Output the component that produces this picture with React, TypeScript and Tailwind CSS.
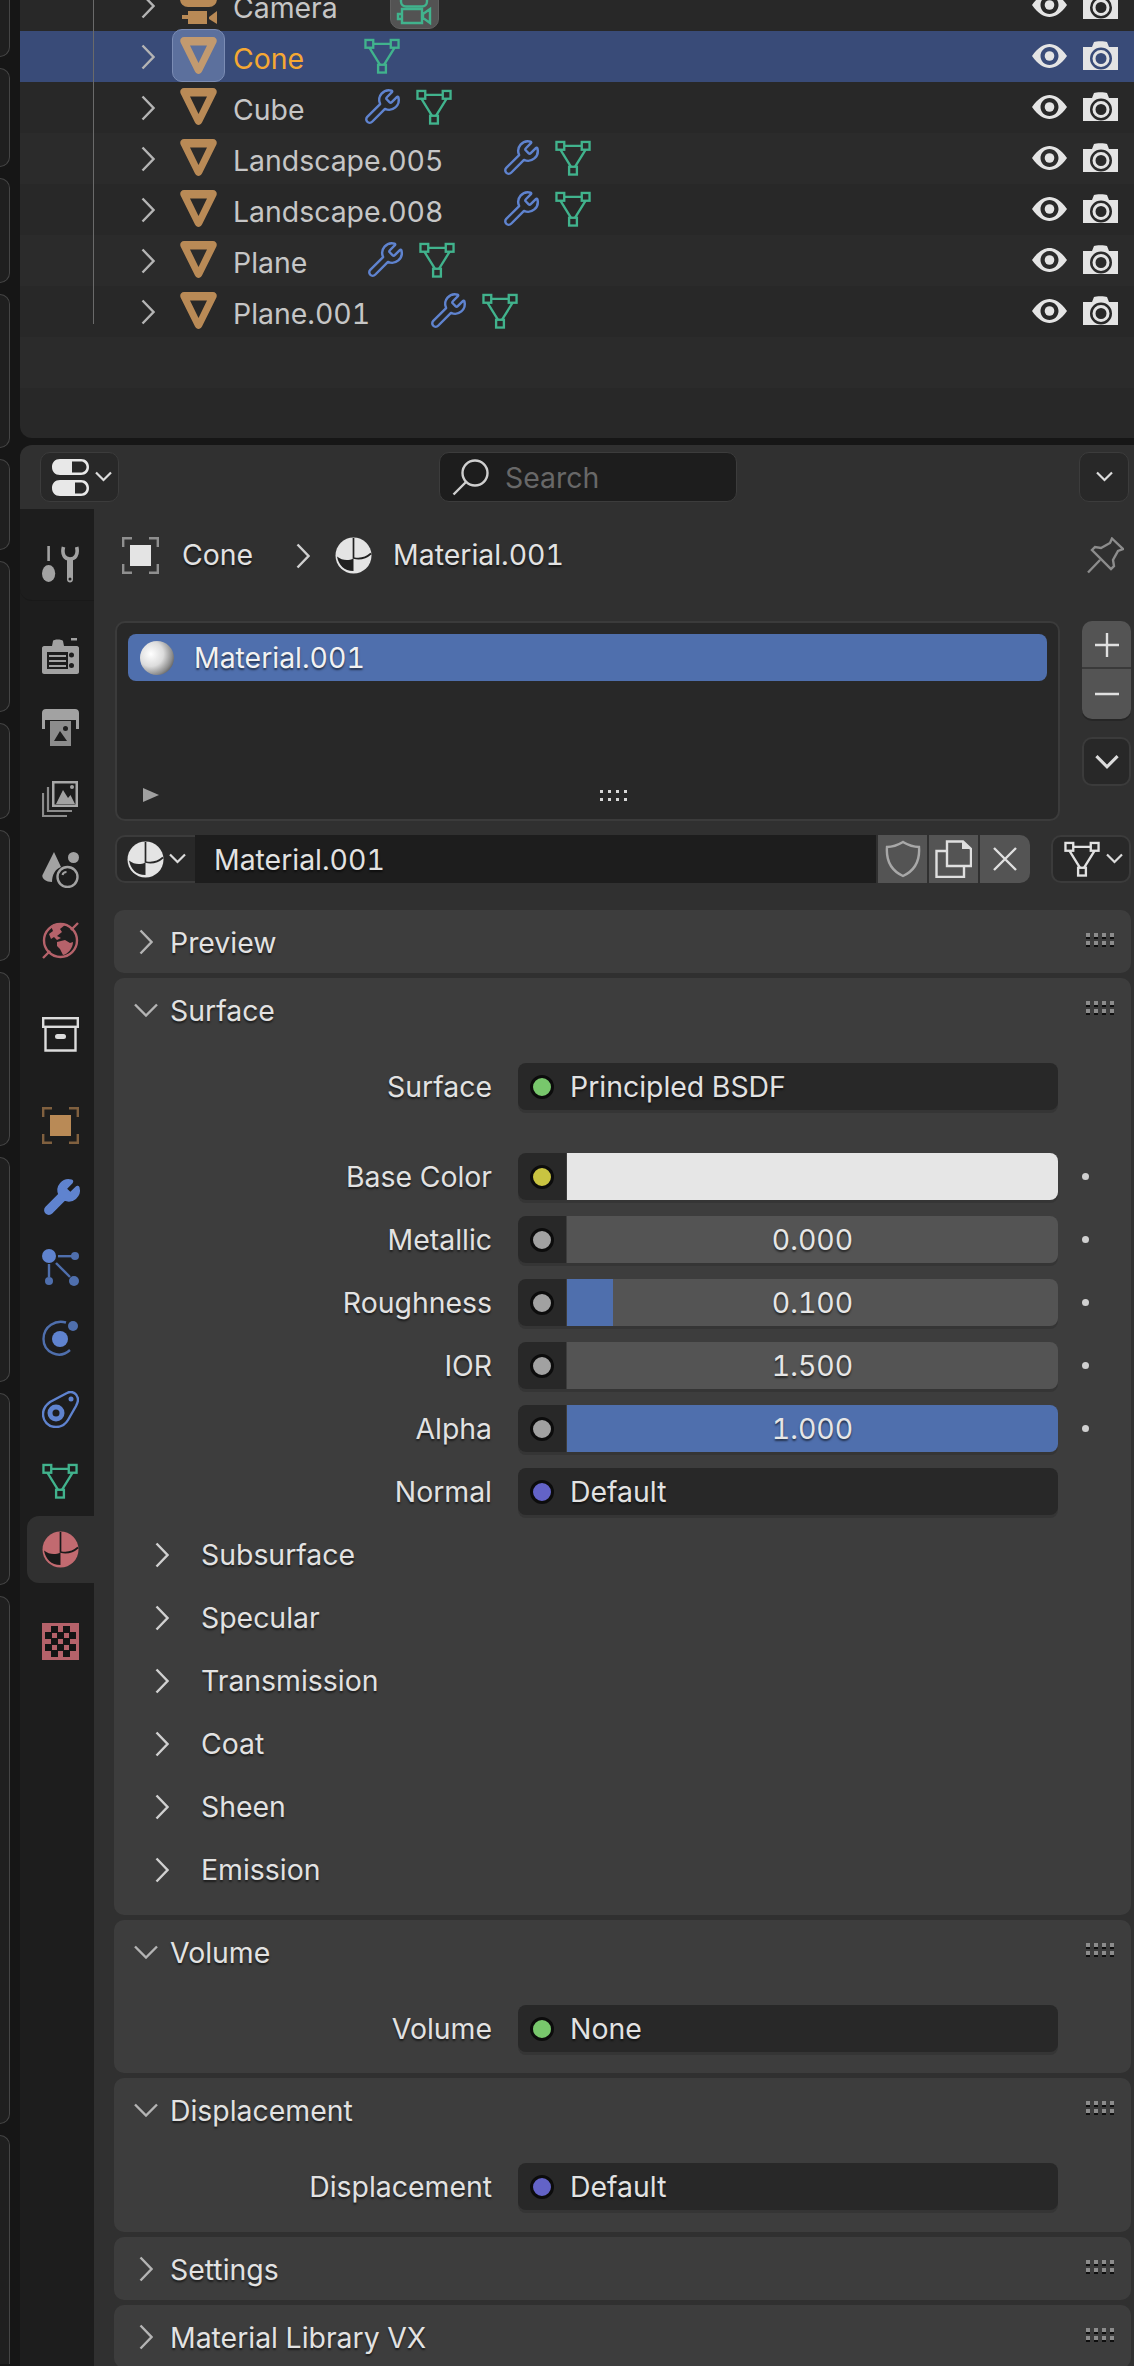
import { Wrench } from "lucide-react";

const font = "font-['Inter','Noto_Sans',sans-serif] text-[28.4px] leading-none [font-variant-numeric:tabular-nums] pt-[2px]";
const shadow = "[text-shadow:0_2px_2px_rgba(0,0,0,0.55)]";

const GREEN = "#41b38d";
const BLUE = "#5f83cf";
const ORANGE = "#b98a56";
const RED = "#b5626a";
const GREY = "#a2a2a2";

// heights of the viewport toolbar slivers along the left edge
const slivers = [
  { h: "h-[57px]", r: "rounded-br-xl border-b" },
  { h: "h-[99px]", r: "rounded-r-xl border-y" },
  { h: "h-[105px]", r: "rounded-r-xl border-y" },
  { h: "h-[154px]", r: "rounded-r-xl border-y" },
  { h: "h-[91px]", r: "rounded-r-xl border-y" },
  { h: "h-[151px]", r: "rounded-r-xl border-y" },
  { h: "h-[96px]", r: "rounded-r-xl border-y" },
  { h: "h-[131px]", r: "rounded-r-xl border-y" },
  { h: "h-[174px]", r: "rounded-r-xl border-y" },
  { h: "h-[225px]", r: "rounded-r-xl border-y" },
  { h: "h-[192px]", r: "rounded-r-xl border-y" },
  { h: "h-[528px]", r: "rounded-r-xl border-y" },
  { h: "h-[229px]", r: "rounded-tr-xl border-t" },
];

function Chevron({ color = "#b4b4b4" }: { color?: string }) {
  return (
    <svg width="14" height="26" viewBox="0 0 14 26" fill="none" stroke={color} strokeWidth="2.4" className="shrink-0">
      <path d="M1.5 1.5L12.5 13L1.5 24.5" />
    </svg>
  );
}

function ChevronOpen() {
  return (
    <svg width="24" height="14" viewBox="0 0 24 14" fill="none" stroke="#b4b4b4" strokeWidth="2.4" className="shrink-0">
      <path d="M1 1.5L12 12.5L23 1.5" />
    </svg>
  );
}

function SmallDown({ size = 17, color = "#dcdcdc" }: { size?: number; color?: string }) {
  return (
    <svg width={size} height={size * 0.65} viewBox="0 0 17 11" fill="none" stroke={color} strokeWidth="2.2" className="shrink-0">
      <path d="M1 1.5L8.5 9L16 1.5" />
    </svg>
  );
}

function MeshIcon({ color = GREEN, size = 36 }: { color?: string; size?: number }) {
  return (
    <svg width={size} height={size} viewBox="0 0 37 37" fill="none" stroke={color} strokeWidth="2.4" className="shrink-0">
      <rect x="1.5" y="2" width="8" height="8" />
      <rect x="27.5" y="2" width="8" height="8" />
      <rect x="14.5" y="27.5" width="8" height="8" />
      <path d="M9.5 6H27.5M5.5 10L16.5 27.5M31.5 10L20.5 27.5" />
    </svg>
  );
}

function TriangleIcon({ color = ORANGE }: { color?: string }) {
  return (
    <svg width="37" height="37" viewBox="0 0 37 37" className="shrink-0">
      <path
        fillRule="evenodd"
        fill={color}
        d="M4 0H33C36 0 37.5 3 36.4 5.5L22 34.5C20.3 37.8 16.7 37.8 15 34.5L0.6 5.5C-0.5 3 1 0 4 0ZM10 8.5L18.5 26L27 8.5Z"
      />
    </svg>
  );
}

function CameraObjectIcon() {
  return (
    <svg width="37" height="44" viewBox="0 0 37 44" fill={ORANGE} className="shrink-0">
      <rect x="0" y="0" width="37" height="27" rx="8" />
      <rect x="8" y="31" width="19" height="13" />
      <rect x="2" y="35" width="6" height="4" />
      <path d="M29 37L37 31V44L29 39Z" />
    </svg>
  );
}

function EyeIcon() {
  return (
    <svg width="35" height="24" viewBox="0 0 35 24" fill="#e4e4e4" className="shrink-0">
      <path
        fillRule="evenodd"
        d="M0 12C6 3.5 12 0 17.5 0C23 0 29 3.5 35 12C29 20.5 23 24 17.5 24C12 24 6 20.5 0 12ZM17.5 3C12.5 3 8.5 7 8.5 12C8.5 17 12.5 21 17.5 21C22.5 21 26.5 17 26.5 12C26.5 7 22.5 3 17.5 3Z"
      />
      <circle cx="17.5" cy="12" r="4.8" />
    </svg>
  );
}

function RenderIcon() {
  return (
    <svg width="35" height="29" viewBox="0 0 35 29" className="shrink-0">
      <path
        fill="#e4e4e4"
        fillRule="evenodd"
        d="M0 6H9L11 1C13 0 22 0 24 1L26 6H35V29H0ZM18 6.5A11 11 0 1 0 18 28.5A11 11 0 1 0 18 6.5Z"
      />
      <circle cx="18" cy="17.5" r="7" fill="none" stroke="#e4e4e4" strokeWidth="3" />
    </svg>
  );
}

function PanelGrip() {
  return (
    <div className="grid grid-cols-4 gap-1">
      {Array.from({ length: 8 }).map((_, i) => (
        <span key={i} className="size-1 bg-[#8c8c8c] shadow-[0_2px_0_#0f0f0f]" />
      ))}
    </div>
  );
}

function MaterialIcon({ color = "#e4e4e4", hole = "#202020" }: { color?: string; hole?: string }) {
  return (
    <svg width="37" height="37" viewBox="0 0 37 37" className="shrink-0">
      <circle cx="18.5" cy="18.5" r="18" fill={color} />
      <path fill={hole} d="M2 19.500C7 23.500 13 24 18.500 21.500V34C9 34 3.500 28 2 19.500Z" />
      <path fill="none" stroke={hole} strokeWidth="1.7" d="M18.500 1V21C25 22.500 31 21 36 16.500" />
    </svg>
  );
}

function ObjectIcon({ color = "#e4e4e4", frame = "#8f8f8f" }: { color?: string; frame?: string }) {
  return (
    <svg width="37" height="37" viewBox="0 0 37 37" fill="none" className="shrink-0">
      <rect x="8" y="8" width="21" height="21" fill={color} />
      <path
        stroke={frame}
        strokeWidth="2.4"
        d="M10 1.2H1.2V10M27 1.2H35.8V10M10 35.8H1.2V27M27 35.8H35.8V27"
      />
    </svg>
  );
}

function Sphere() {
  return (
    <span className="size-[34px] shrink-0 rounded-full bg-[radial-gradient(circle_at_32%_38%,#ffffff,#dcdcdc_40%,#8d8d8d_68%,#262626_95%)]" />
  );
}

const tabIcons: Record<string, React.ReactNode> = {
  tool: (
    <svg width="37" height="37" viewBox="0 0 37 37" fill={GREY}>
      <rect x="5.300" y="0" width="2.600" height="15" />
      <ellipse cx="6.600" cy="27.500" rx="6.600" ry="8.500" />
      <path fill="none" stroke={GREY} strokeWidth="3.600" d="M21.500 1C19.500 9 23 13 28 13C33 13 36.500 9 34.700 1" />
      <path fill={GREY} fillRule="evenodd" d="M25 12H31V33.500C31 37.500 25 37.500 25 33.500ZM28 31.500A1.500 1.500 0 1 0 28 34.500A1.500 1.500 0 1 0 28 31.500Z" />
    </svg>
  ),
  render: (
    <svg width="37" height="37" viewBox="0 0 37 37" fill={GREY}>
      <path
        fillRule="evenodd"
        d="M2 8H10L11 3C11.500 1 20 1 21 3L22 8H35C36 8 37 9 37 10V34C37 35 36 36 35 36H2C1 36 0 35 0 34V10C0 9 1 8 2 8ZM5 14V31H26V14ZM29.500 14.500A2.500 2.500 0 1 0 29.500 19.500A2.500 2.500 0 1 0 29.500 14.500ZM29.500 25A2.500 2.500 0 1 0 29.500 30A2.500 2.500 0 1 0 29.500 25Z"
      />
      <rect x="29" y="0" width="6" height="2.500" />
      <rect x="7" y="17" width="17" height="2" />
      <rect x="7" y="22" width="17" height="2" />
      <rect x="7" y="27" width="17" height="2" />
    </svg>
  ),
  output: (
    <svg width="37" height="37" viewBox="0 0 37 37" fill={GREY}>
      <path d="M4 0H33C35.500 0 37 1.500 37 4V20H34V11H3V20H0V4C0 1.500 1.500 0 4 0Z" />
      <path
        fill="#8c8c8c"
        fillRule="evenodd"
        d="M8 12H29V37H8ZM23.500 17A2.500 2.500 0 1 0 23.500 22A2.500 2.500 0 1 0 23.500 17ZM18 22L12 32H25Z"
      />
    </svg>
  ),
  layer: (
    <svg width="37" height="37" viewBox="0 0 37 37" fill="none" stroke="#8c8c8c" strokeWidth="2.200">
      <rect x="10" y="1" width="26" height="26" fill="#a8a8a8" stroke="none" />
      <path fill="#1d1d1d" stroke="none" d="M12.500 3.500H33.500V24.500H12.500Z" />
      <path fill={GREY} stroke="none" d="M14 24L21 10L26 18L28.500 15L33 24Z" />
      <circle cx="30" cy="7" r="2" fill={GREY} stroke="none" />
      <path d="M6 7V31H30M1 13V36H25" />
    </svg>
  ),
  scene: (
    <svg width="37" height="37" viewBox="0 0 37 37" fill="none">
      <path fill={GREY} d="M12 1L0.500 24C-0.500 27 3 31 10 31C10 24 13 18 19 16Z" />
      <circle cx="31.500" cy="6.500" r="5.500" fill={GREY} />
      <circle cx="25.500" cy="26" r="10" stroke={GREY} strokeWidth="2.400" />
      <path stroke={GREY} strokeWidth="2" d="M20.500 24C21 22 23 21 24.500 21" />
    </svg>
  ),
  world: (
    <svg width="37" height="37" viewBox="0 0 37 37" fill="none">
      <circle cx="18.500" cy="18.500" r="16.500" fill="#1d1d1d" stroke={RED} strokeWidth="2.400" />
      <path fill={RED} d="M9 4C13 1 20 1 23 3L18 7L20 10L15 14L19 16L15 18L12 15L9 17L7 12L11 9Z" />
      <path fill={RED} d="M15 20L23 18L28 21L31 20C31 26 26 32 21 33L18 27L15 24Z" />
      <path stroke={RED} strokeWidth="2.400" d="M29 8L36 1M8 29L1 36" />
    </svg>
  ),
  collection: (
    <svg width="37" height="35" viewBox="0 0 37 35" fill="none" stroke="#dcdcdc" strokeWidth="2.400">
      <rect x="1.200" y="1.200" width="34.600" height="8.600" />
      <path d="M3.500 10V33.500H33.500V10" />
      <rect x="13" y="17" width="11" height="5" rx="2.500" fill="#dcdcdc" stroke="none" />
    </svg>
  ),
  particles: (
    <svg width="37" height="37" viewBox="0 0 37 37" fill={BLUE} stroke="none">
      <circle cx="7" cy="7" r="7" />
      <circle cx="33" cy="7" r="4" fill="#4f6fad" />
      <rect x="16" y="6" width="14" height="2.400" fill="#4f6fad" />
      <rect x="5.800" y="15" width="2.400" height="13" fill="#4f6fad" />
      <circle cx="7" cy="32" r="4" fill="#4f6fad" />
      <path stroke="#4f6fad" strokeWidth="2.400" d="M14 14L28 28" />
      <circle cx="32" cy="32" r="5" fill="#4f6fad" />
    </svg>
  ),
  physics: (
    <svg width="37" height="37" viewBox="0 0 37 37" fill="none">
      <circle cx="18" cy="19" r="8" fill={BLUE} />
      <circle cx="31" cy="6" r="5" fill="#4f6fad" />
      <path stroke="#4f6fad" strokeWidth="2.400" d="M24 2.500C14 -0.500 1.500 6 1.500 19C1.500 32 17 40 28 30" />
    </svg>
  ),
  constraints: (
    <svg width="37" height="37" viewBox="0 0 37 37" fill="none">
      <path
        stroke={BLUE}
        strokeWidth="2.400"
        d="M14 36C6 36 1 30 1 23C1 18 4 14 8 11L25 2C30 -1 36 3 36 9C36 11 35 13 34 15L26 29C23 34 19 36 14 36Z"
      />
      <circle cx="14" cy="22" r="8.500" fill={BLUE} />
      <circle cx="14" cy="22" r="3.500" fill="#1d1d1d" />
      <circle cx="29" cy="8" r="2.500" fill={BLUE} />
    </svg>
  ),
  texture: (
    <svg width="37" height="37" viewBox="0 0 37 37">
      <rect width="37" height="37" fill={RED} />
      {[
        [3, 9],
        [15, 9],
        [27, 9],
        [9, 3],
        [21, 3],
        [9, 15],
        [21, 15],
        [3, 21],
        [15, 21],
        [27, 21],
        [9, 27],
        [21, 27],
      ].map(([x, y]) => (
        <rect key={`${x}-${y}`} x={x} y={y} width="7" height="7" fill="#141414" />
      ))}
    </svg>
  ),
};

function Tab({ icon }: { icon: React.ReactNode }) {
  return <div className="flex h-[71px] items-center pl-[22px]">{icon}</div>;
}

function OutlinerRow({
  name,
  alt,
  selected,
  modifier,
}: {
  name: string;
  alt?: boolean;
  selected?: boolean;
  modifier?: boolean;
}) {
  const bg = selected ? "bg-[#394b78]" : alt ? "bg-[#2b2b2b]" : "bg-[#282828]";
  return (
    <div className={`flex h-[51px] items-center pl-[121px] pr-4 ${bg}`}>
      <Chevron />
      <div className="relative ml-[25px] flex size-[37px] shrink-0 -translate-y-[1px] items-center justify-center">
        {selected && (
          <span className="absolute -inset-x-[8px] -inset-y-[8px] rounded-[10px] border border-[#7b8cb4] bg-[#5c709d]" />
        )}
        <span className="relative flex">
          <TriangleIcon color={selected ? "#c29a6f" : ORANGE} />
        </span>
      </div>
      <span className={`ml-[16px] mt-[3px] ${font} ${selected ? "text-[#f5a833]" : "text-[#c6c6c6]"}`}>{name}</span>
      <div className="ml-[60px] flex -translate-y-[1px] items-center">
        {modifier && <Wrench size={39} color={BLUE} strokeWidth={1.5} className="mr-[13px] shrink-0 -translate-x-[1px]" />}
        <MeshIcon />
      </div>
      <div className="ml-auto flex -translate-y-[1px] items-center gap-[16px]">
        <EyeIcon />
        <RenderIcon />
      </div>
    </div>
  );
}

function Label({ children }: { children: React.ReactNode }) {
  return <span className={`w-[378px] shrink-0 text-right ${font} ${shadow} text-[#e2e2e2]`}>{children}</span>;
}

function Socket({ color }: { color: string }) {
  return <span className="size-[24px] shrink-0 rounded-full border-[3px] border-[#0c0c0c]" style={{ backgroundColor: color }} />;
}

function LinkRow({ label, socket, value, mt = "" }: { label: string; socket: string; value: string; mt?: string }) {
  return (
    <div className={`flex h-[47px] items-center ${mt}`}>
      <Label>{label}</Label>
      <div className="ml-[26px] flex h-[47px] w-[540px] items-center rounded-lg bg-[#282828] pl-[12px] shadow-[0_3px_0_#353535]">
        <Socket color={socket} />
        <span className={`ml-[16px] ${font} ${shadow} text-[#e2e2e2]`}>{value}</span>
      </div>
    </div>
  );
}

function ValueRow({ label, socket, value, fill }: { label: string; socket: string; value?: string; fill: string }) {
  return (
    <div className="mt-[16px] flex h-[47px] items-center">
      <Label>{label}</Label>
      <div className="ml-[26px] flex h-[47px] w-[540px] rounded-lg shadow-[0_3px_0_#353535]">
        <div className="flex w-[48px] shrink-0 items-center rounded-l-lg bg-[#282828] pl-[12px]">
          <Socket color={socket} />
        </div>
        <div className={`relative ml-px flex flex-1 items-center justify-center overflow-hidden rounded-r-lg ${fill}`}>
          {label === "Roughness" && <span className="absolute inset-y-0 left-0 w-[46px] bg-[#4f6fad]" />}
          <span className={`relative ${font} ${shadow} text-[#e6e6e6]`}>{value}</span>
        </div>
      </div>
      <span className="ml-[24px] size-[7px] rounded-full bg-[#d0d0d0]" />
    </div>
  );
}

function SubPanel({ name }: { name: string }) {
  return (
    <div className="flex h-[63px] items-center pl-[41px]">
      <Chevron color="#d0d0d0" />
      <span className={`ml-[32px] ${font} ${shadow} text-[#e2e2e2]`}>{name}</span>
    </div>
  );
}

function PanelHeader({ title, open }: { title: string; open?: boolean }) {
  return (
    <div className="flex h-[63px] items-center">
      <div className="flex w-[56px] justify-center pl-[8px]">{open ? <ChevronOpen /> : <Chevron />}</div>
      <span className={`mt-[2px] ${font} ${shadow} text-[#e2e2e2]`}>{title}</span>
      <div className="ml-auto -translate-y-[3px] pr-[17px]">
        <PanelGrip />
      </div>
    </div>
  );
}

export default function App() {
  return (
    <div className="flex h-[2366px] w-[1134px] overflow-hidden bg-[#161616]">
      {/* left edge slivers */}
      <div className="flex w-[20px] shrink-0 flex-col gap-[11px]">
        {slivers.map((s, i) => (
          <div key={i} className={`${s.h} ${s.r} w-[10px] shrink-0 border-r border-[#454545] bg-[#1f1f1f]`} />
        ))}
      </div>

      <div className="flex min-w-0 flex-1 flex-col">
        {/* OUTLINER */}
        <div className="relative h-[438px] shrink-0 overflow-hidden rounded-bl-xl bg-[#282828]">
          <span className="absolute left-[73px] top-0 z-10 h-[324px] w-px bg-[#6a6a6a]" />
          <div className="-mt-[20px] flex h-[51px] items-center bg-[#282828] pl-[121px] pr-4">
            <Chevron />
            <div className="ml-[25px] shrink-0 -translate-y-[4px]">
              <CameraObjectIcon />
            </div>
            <span className={`ml-[16px] mt-[3px] ${font} text-[#c6c6c6]`}>Camera</span>
            <div className="relative ml-[52px] flex h-[48px] w-[49px] shrink-0 -translate-y-[1px] items-center justify-center rounded-[10px] border border-[#5f5f5f] bg-[#535353]">
              <svg width="36" height="40" viewBox="0 0 36 40" fill="none" stroke={GREEN} strokeWidth="2.4">
                <rect x="5" y="2" width="26" height="19.500" rx="5" />
                <path d="M6 29H2V34H6M6 24H26V38H6ZM27 29L34 24V38L27 33Z" />
              </svg>
            </div>
            <div className="ml-auto flex -translate-y-[1px] items-center gap-[16px]">
              <EyeIcon />
              <RenderIcon />
            </div>
          </div>
          <OutlinerRow name="Cone" selected />
          <OutlinerRow name="Cube" modifier />
          <OutlinerRow name="Landscape.005" modifier alt />
          <OutlinerRow name="Landscape.008" modifier />
          <OutlinerRow name="Plane" modifier alt />
          <OutlinerRow name="Plane.001" modifier />
          <div className="h-[51px] bg-[#2b2b2b]" />
        </div>

        {/* PROPERTIES */}
        <div className="mt-[7px] flex-1 overflow-hidden rounded-tl-xl bg-[#303030]">
          {/* header */}
          <div className="flex h-[64px] items-start pl-[20px] pr-[5px] pt-[7px]">
            <div className="flex h-[50px] w-[79px] items-center rounded-[10px] border border-[#3c3c3c] bg-[#282828] pl-[11px]">
              <svg width="37" height="37" viewBox="0 0 37 37" className="shrink-0">
                <path fill="#e8e8e8" fillRule="evenodd" d="M8 0H29C34 0 37 3.500 37 8C37 12.500 34 16 29 16H8C3 16 0 12.500 0 8C0 3.500 3 0 8 0ZM20 2.500V13.500H29C32 13.500 34.500 11 34.500 8C34.500 5 32 2.500 29 2.500Z" />
                <path fill="#e8e8e8" fillRule="evenodd" d="M8 21H29C34 21 37 24.500 37 29C37 33.500 34 37 29 37H8C3 37 0 33.500 0 29C0 24.500 3 21 8 21ZM23 23.500V34.500H29C32 34.500 34.500 32 34.500 29C34.500 26 32 23.500 29 23.500Z" />
              </svg>
              <span className="ml-[6px]">
                <SmallDown />
              </span>
            </div>
            <div className="ml-[320px] flex h-[50px] w-[298px] items-center rounded-[10px] border border-[#3c3c3c] bg-[#1d1d1d] pl-[12px]">
              <svg width="37" height="37" viewBox="0 0 37 37" fill="none" stroke="#cfcfcf" strokeWidth="2.400" className="shrink-0">
                <circle cx="23" cy="14" r="12.500" />
                <path d="M14 23L1.500 35.500" />
              </svg>
              <span className={`ml-[16px] ${font} text-[#686868]`}>Search</span>
            </div>
            <div className="ml-auto flex h-[50px] w-[50px] items-center justify-center rounded-[10px] border border-[#3c3c3c] bg-[#282828]">
              <SmallDown />
            </div>
          </div>

          <div className="flex">
            {/* tab column */}
            <div className="h-[1857px] w-[74px] shrink-0 bg-[#1d1d1d]">
              <div className="rounded-bl-xl border-b border-[#191919] pt-[20px]">
                <Tab icon={tabIcons.tool} />
              </div>
              <div className="mt-[20px]">
                <Tab icon={tabIcons.render} />
                <Tab icon={tabIcons.output} />
                <Tab icon={tabIcons.layer} />
                <Tab icon={tabIcons.scene} />
                <Tab icon={tabIcons.world} />
              </div>
              <div className="mt-[23px]">
                <Tab icon={tabIcons.collection} />
              </div>
              <div className="mt-[20px]">
                <Tab icon={<ObjectIcon color={ORANGE} frame="#80603f" />} />
                <Tab icon={<Wrench size={40} color={BLUE} fill={BLUE} strokeWidth={1.5} />} />
                <Tab icon={tabIcons.particles} />
                <Tab icon={tabIcons.physics} />
                <Tab icon={tabIcons.constraints} />
                <Tab icon={<MeshIcon />} />
                <div className="ml-[7px] flex h-[67px] items-center rounded-l-xl bg-[#303030] pl-[15px]">
                  <MaterialIcon color="#c26a70" hole="#1a1a1a" />
                </div>
              </div>
              <div className="mt-[23px]">
                <Tab icon={tabIcons.texture} />
              </div>
            </div>

            {/* main column */}
            <div className="min-w-0 flex-1 pl-[20px] pr-[3px]">
              {/* breadcrumb */}
              <div className={`mt-[27px] flex h-[37px] items-center pl-[8px] pr-[7px] ${font} ${shadow} text-[#e2e2e2]`}>
                <ObjectIcon />
                <span className="ml-[23px]">Cone</span>
                <span className="ml-[43px]">
                  <Chevron color="#d0d0d0" />
                </span>
                <span className="ml-[25px]">
                  <MaterialIcon />
                </span>
                <span className="ml-[21px]">Material.001</span>
                <svg width="37" height="37" viewBox="0 0 37 37" fill="none" stroke="#8c8c8c" strokeWidth="2.400" className="ml-auto">
                  <path d="M25 1.500L36 12L31 14L26 23L27 29L24 32L5 13L8 10L14 11L23 6ZM13 23L1 35.500" />
                </svg>
              </div>

              {/* slot list */}
              <div className="mt-[48px] flex items-start pl-px">
                <div className="relative h-[200px] w-[945px] rounded-[10px] border-2 border-[#3b3b3b] bg-[#282828] px-[11px] pt-[11px]">
                  <div className="flex h-[47px] items-center rounded-lg bg-[#4f6fad] pl-[12px]">
                    <Sphere />
                    <span className={`ml-[20px] ${font} ${shadow} text-[#f2f2f2]`}>Material.001</span>
                  </div>
                  <svg width="16" height="14" viewBox="0 0 16 14" className="absolute bottom-[17px] left-[26px]">
                    <path fill="#a0a0a0" d="M0 0L16 7L0 14Z" />
                  </svg>
                  <div className="absolute bottom-[18px] left-[483px] grid grid-cols-4 gap-x-[5px] gap-y-[5px]">
                    {Array.from({ length: 8 }).map((_, i) => (
                      <span key={i} className="size-[3px] bg-[#d8d8d8]" />
                    ))}
                  </div>
                </div>
                <div className="ml-[22px] flex w-[49px] flex-col">
                  <div className="overflow-hidden rounded-[10px] bg-[#545454] shadow-[0_2px_0_#262626]">
                    <div className="flex h-[48px] items-center justify-center border-b-2 border-[#3a3a3a] pt-[2px] text-[#e0e0e0]">
                      <svg width="24" height="24" viewBox="0 0 24 24" stroke="currentColor" strokeWidth="2.400">
                        <path d="M0 12H24M12 0V24" />
                      </svg>
                    </div>
                    <div className="flex h-[50px] items-center justify-center text-[#e0e0e0]">
                      <svg width="24" height="4" viewBox="0 0 24 4" stroke="currentColor" strokeWidth="2.400">
                        <path d="M0 2H24" />
                      </svg>
                    </div>
                  </div>
                  <div className="mt-[18px] flex h-[49px] items-center justify-center rounded-[10px] border-2 border-[#3b3b3b] bg-[#282828]">
                    <SmallDown size={24} />
                  </div>
                </div>
              </div>

              {/* material name row */}
              <div className="mt-[14px] flex h-[48px] items-stretch pl-px">
                <div className="flex w-[80px] items-center rounded-l-[10px] border-2 border-r-0 border-[#3b3b3b] bg-[#282828] pl-[10px]">
                  <MaterialIcon hole="#282828" />
                  <span className="ml-[5px]">
                    <SmallDown />
                  </span>
                </div>
                <div className={`flex w-[681px] items-center bg-[#1d1d1d] pl-[19px] ${font} ${shadow} text-[#e2e2e2]`}>
                  Material.001
                </div>
                <div className="ml-[2px] flex w-[49px] items-center justify-center bg-[#545454]">
                  <svg width="36" height="38" viewBox="0 0 36 38" fill="none" stroke="#a8a8a8" strokeWidth="2.400">
                    <path d="M18 2C23 5 28 7 34 7C35 20 31 30 18 36C5 30 1 20 2 7C8 7 13 5 18 2Z" />
                  </svg>
                </div>
                <div className="ml-[2px] flex w-[49px] items-center justify-center bg-[#545454]">
                  <svg width="37" height="38" viewBox="0 0 37 38" fill="none" stroke="#e0e0e0" strokeWidth="2.400">
                    <path d="M12 1.500H28L36 9V26H12Z" />
                    <path fill="#e0e0e0" stroke="none" d="M27 1L36 9H27Z" />
                    <path d="M12 11H1.500V37H29V26" />
                  </svg>
                </div>
                <div className="ml-[2px] flex w-[50px] items-center justify-center rounded-r-[10px] bg-[#545454]">
                  <svg width="24" height="24" viewBox="0 0 24 24" stroke="#e0e0e0" strokeWidth="2.400">
                    <path d="M1 1L23 23M23 1L1 23" />
                  </svg>
                </div>
                <div className="ml-auto flex w-[80px] items-center rounded-[10px] border-2 border-[#3b3b3b] bg-[#282828] pl-[11px]">
                  <MeshIcon color="#e2e2e2" />
                  <span className="ml-[6px]">
                    <SmallDown />
                  </span>
                </div>
              </div>

              {/* panels */}
              <div className="mt-[27px] flex flex-col gap-[5px]">
                <div className="rounded-[10px] bg-[#3d3d3d]">
                  <PanelHeader title="Preview" />
                </div>

                <div className="rounded-[10px] bg-[#3d3d3d] pb-[14px]">
                  <PanelHeader title="Surface" open />
                  <LinkRow label="Surface" socket="#78c76c" value="Principled BSDF" mt="mt-[22px]" />
                  <div className="h-[27px]" />
                  <ValueRow label="Base Color" socket="#c9c441" fill="bg-[#e6e6e6]" />
                  <ValueRow label="Metallic" socket="#a1a1a1" value="0.000" fill="bg-[#545454]" />
                  <ValueRow label="Roughness" socket="#a1a1a1" value="0.100" fill="bg-[#545454]" />
                  <ValueRow label="IOR" socket="#a1a1a1" value="1.500" fill="bg-[#545454]" />
                  <ValueRow label="Alpha" socket="#a1a1a1" value="1.000" fill="bg-[#4f6fad]" />
                  <LinkRow label="Normal" socket="#6363c7" value="Default" mt="mt-[16px]" />
                  <div className="mt-[8px]">
                    <SubPanel name="Subsurface" />
                    <SubPanel name="Specular" />
                    <SubPanel name="Transmission" />
                    <SubPanel name="Coat" />
                    <SubPanel name="Sheen" />
                    <SubPanel name="Emission" />
                  </div>
                </div>

                <div className="rounded-[10px] bg-[#3d3d3d] pb-[21px]">
                  <PanelHeader title="Volume" open />
                  <LinkRow label="Volume" socket="#78c76c" value="None" mt="mt-[22px]" />
                </div>

                <div className="rounded-[10px] bg-[#3d3d3d] pb-[22px]">
                  <PanelHeader title="Displacement" open />
                  <LinkRow label="Displacement" socket="#6363c7" value="Default" mt="mt-[22px]" />
                </div>

                <div className="rounded-[10px] bg-[#3d3d3d]">
                  <PanelHeader title="Settings" />
                </div>

                <div className="rounded-[10px] bg-[#3d3d3d]">
                  <PanelHeader title="Material Library VX" />
                </div>
              </div>
            </div>
          </div>
        </div>
      </div>
    </div>
  );
}
